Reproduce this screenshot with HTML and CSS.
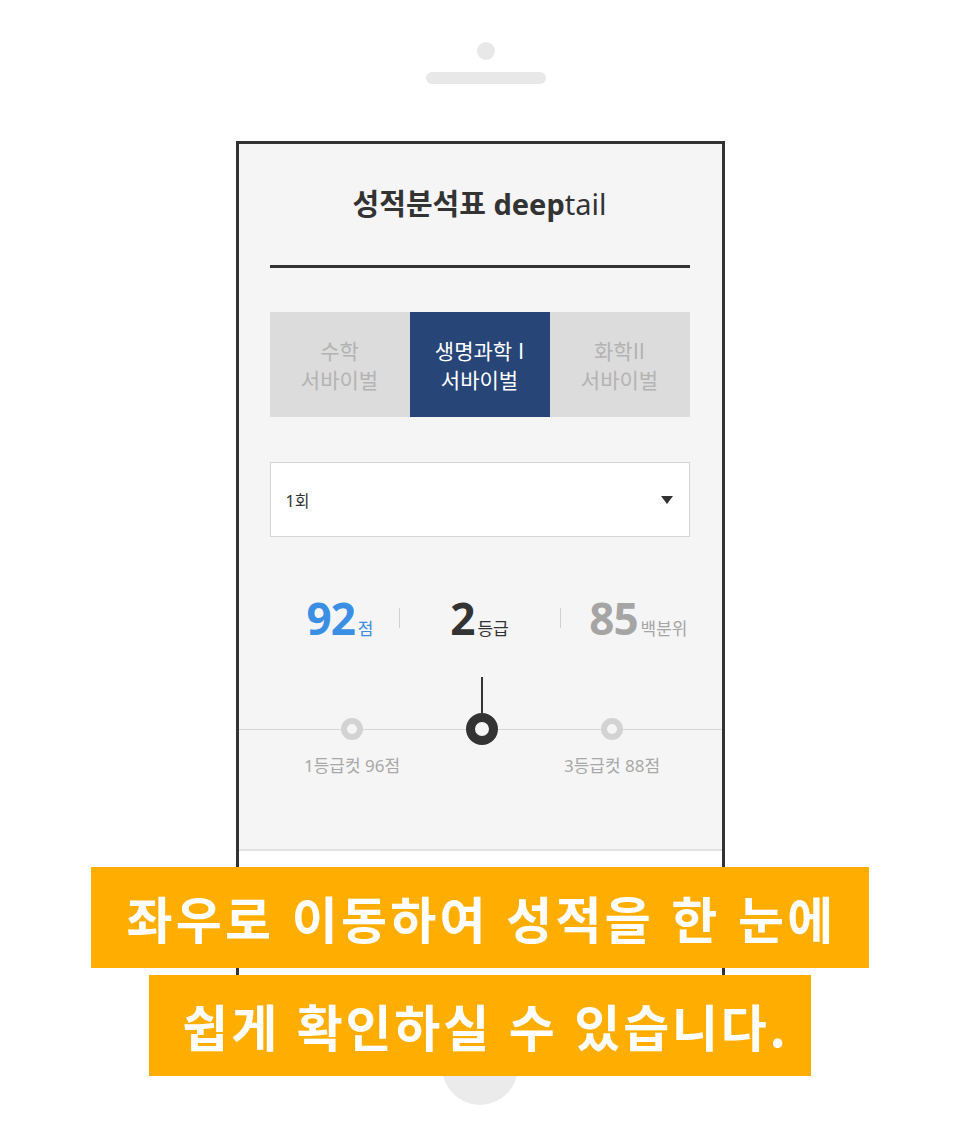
FILE: index.html
```html
<!DOCTYPE html>
<html lang="ko">
<head>
<meta charset="utf-8">
<title>성적분석표 deeptail</title>
<link rel="stylesheet" href="styles.css">
</head>
<body>
<div class="phone">
  <div class="speaker"><span class="cam"></span><span class="grille"></span></div>
  <div class="screen">
    <div class="pad">
      <h1 class="title">성적분석표 deep<span class="light">tail</span></h1>
      <div class="rule"></div>
      <div class="tabs">
        <div class="tab">수학<br>서바이벌</div>
        <div class="tab on">생명과학 I<br>서바이벌</div>
        <div class="tab">화학II<br>서바이벌</div>
      </div>
      <div class="select"><span>1회</span><i class="caret"></i></div>
      <div class="stats">
        <div class="stat blue"><span class="num">92</span><span class="unit">점</span></div>
        <div class="sep"></div>
        <div class="stat dark"><span class="num">2</span><span class="unit">등급</span></div>
        <div class="sep"></div>
        <div class="stat grey"><span class="num">85</span><span class="unit">백분위</span></div>
      </div>
    </div>
    <div class="timeline">
      <span class="stick"></span>
      <span class="ring r1"></span>
      <span class="ring big"></span>
      <span class="ring r3"></span>
      <span class="label l1">1등급컷 96점</span>
      <span class="label l3">3등급컷 88점</span>
    </div>
    <div class="divider"></div>
    <div class="blank"></div>
  </div>
  <div class="home"></div>
</div>
<div class="captions">
  <p class="caption">좌우로 이동하여 성적을 한 눈에</p>
  <p class="caption second">쉽게 확인하실 수 있습니다.</p>
</div>
</body>
</html>
```
FILE: styles.css
```css
* { box-sizing: border-box; }
body {
  margin: 0;
  background: #fff;
  font-family: "Noto Sans", "Noto Sans CJK KR", sans-serif;
  color: #333;
}
.phone {
  display: flex;
  flex-direction: column;
  align-items: center;
  padding-top: 42px;
}
.speaker {
  display: flex;
  flex-direction: column;
  align-items: center;
  gap: 12px;
  margin-left: 12px;
}
.cam {
  width: 18px;
  height: 18px;
  border-radius: 50%;
  background: #e8e8e8;
}
.grille {
  width: 120px;
  height: 12px;
  border-radius: 6px;
  background: #e8e8e8;
}
.screen {
  margin-top: 57px;
  width: 489px;
  border: 3px solid #333;
  background: #f5f5f5;
}
.pad {
  padding: 0 32px 0 31px;
}
.title {
  margin: 0;
  padding-top: 40px;
  font-size: 29px;
  line-height: 40px;
  font-weight: 700;
  text-align: center;
  color: #333;
}
.title .light { font-weight: 400; }
.rule {
  margin-top: 41px;
  height: 3px;
  background: #333;
}
.tabs {
  margin-top: 44px;
  display: grid;
  grid-template-columns: repeat(3, 1fr);
  height: 105px;
}
.tab {
  display: flex;
  align-items: center;
  justify-content: center;
  text-align: center;
  font-family: "Noto Sans CJK KR", sans-serif;
  font-size: 21px;
  line-height: 29px;
  color: #b3b3b3;
  background: #dcdcdc;
}
.tab.on {
  background: #274577;
  color: #fff;
}
.select {
  margin-top: 45px;
  height: 75px;
  background: #fff;
  border: 1px solid #d4d4d4;
  display: flex;
  align-items: center;
  justify-content: space-between;
  padding: 0 16px 0 15px;
  font-size: 16px;
  color: #333;
}
.caret {
  width: 0;
  height: 0;
  border-left: 6.5px solid transparent;
  border-right: 6.5px solid transparent;
  border-top: 8px solid #333;
}
.stats {
  margin-top: 59px;
  height: 44px;
  display: grid;
  grid-template-columns: 129px 1px 160px 1px 129px;
  align-items: center;
}
.stat {
  display: flex;
  align-items: baseline;
  justify-content: center;
}
.stat.blue { color: #3a8fe4; padding-left: 12px; }
.stat.dark { color: #333; }
.stat.grey { color: #a5a5a5; justify-content: flex-end; padding-right: 2px; }
.num {
  font-size: 44px;
  line-height: 44px;
  font-weight: 700;
  letter-spacing: -1px;
}
.unit {
  font-size: 17px;
  margin-left: 3px;
}
.sep {
  height: 20px;
  background: #d0d0d0;
}
.timeline {
  margin-top: 37px;
  display: grid;
  grid-template-columns: repeat(3, 130px);
  grid-template-rows: 36px 32px auto;
  justify-content: center;
  padding-left: 4px;
  background-image: linear-gradient(#d5d5d5, #d5d5d5);
  background-size: 100% 1px;
  background-position: 0 52px;
  background-repeat: no-repeat;
}
.stick {
  grid-column: 2;
  grid-row: 1;
  justify-self: center;
  width: 2px;
  height: 36px;
  background: #333;
}
.ring {
  grid-row: 2;
  justify-self: center;
  align-self: center;
  width: 22px;
  height: 22px;
  border: 6px solid #d3d3d3;
  border-radius: 50%;
  background: #f5f5f5;
}
.r1 { grid-column: 1; }
.r3 { grid-column: 3; }
.ring.big {
  grid-column: 2;
  width: 32px;
  height: 32px;
  border: 9px solid #333;
}
.label {
  grid-row: 3;
  justify-self: center;
  margin-top: 11px;
  font-size: 17px;
  line-height: 20px;
  color: #a8a8a8;
  white-space: nowrap;
}
.l1 { grid-column: 1; }
.l3 { grid-column: 3; }
.divider {
  margin-top: 73px;
  height: 2px;
  background: #e2e2e2;
}
.blank {
  height: 170px;
  background: #fff;
}
.home {
  margin-top: 5px;
  width: 76px;
  height: 76px;
  border-radius: 50%;
  background: #ebebeb;
}
.captions {
  position: absolute;
  top: 867px;
  left: 0;
  right: 0;
  display: flex;
  flex-direction: column;
  align-items: center;
  gap: 7px;
}
.caption {
  margin: 0;
  height: 101px;
  padding: 0 32px 0 35px;
  background: #ffae00;
  color: #fff;
  font-family: "Noto Sans CJK KR", sans-serif;
  font-weight: 700;
  font-size: 50px;
  letter-spacing: 3.3px;
  line-height: 101px;
  white-space: nowrap;
}
.caption.second {
  padding: 0 22px 0 33px;
  letter-spacing: 2.8px;
}
```
